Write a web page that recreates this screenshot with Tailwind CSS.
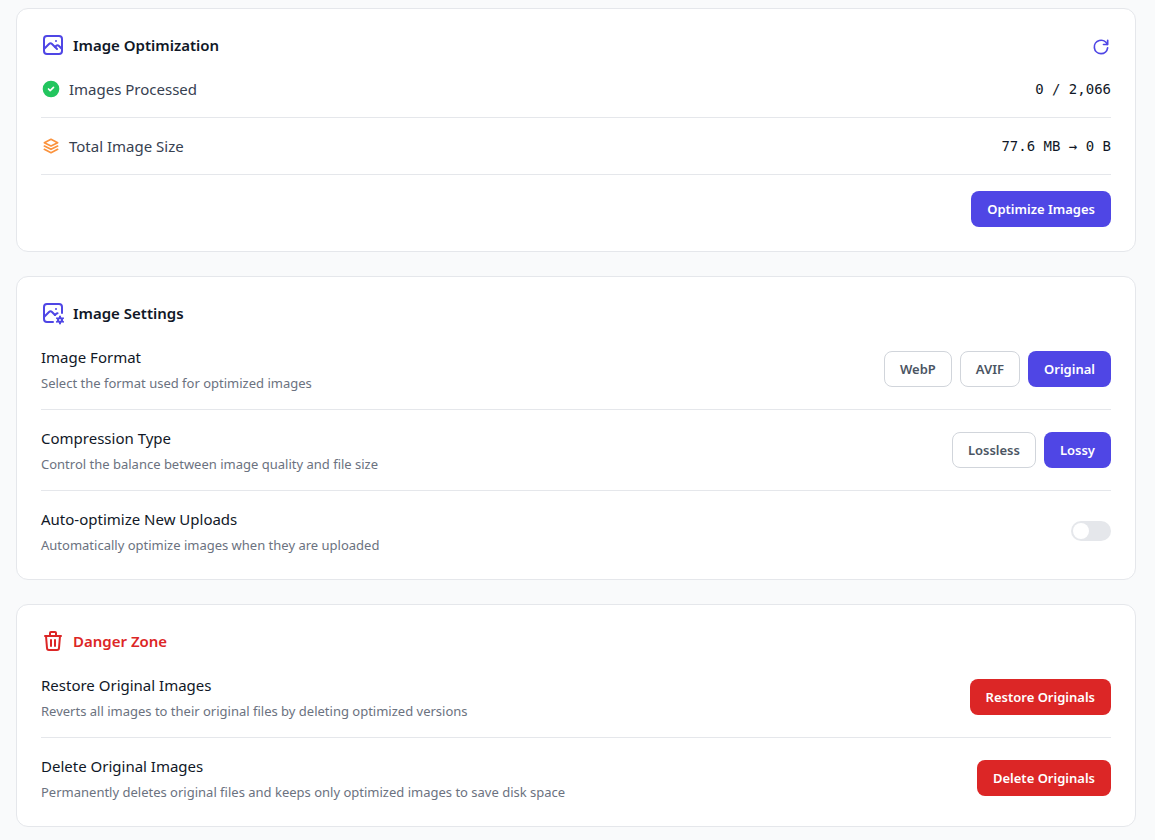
<!DOCTYPE html>
<html lang="en">
<head>
    <meta charset="UTF-8">
    <meta name="viewport" content="width=device-width, initial-scale=1.0">
    <title>Image Optimization</title>
    <script src="https://cdn.jsdelivr.net/npm/@tailwindcss/browser@4"></script>
</head>
<body class="bg-[#f9fafb] text-[#111827] text-[15px] leading-6 font-['Segoe_UI','Noto_Sans',sans-serif]">
    <main class="flex flex-col gap-6 pt-2 pb-3 pl-4 pr-[19px]">

        <!-- Optimization status -->
        <section class="bg-white border border-[#e5e7eb] rounded-xl p-6">
            <div class="flex items-center justify-between h-6 mb-5">
                <h2 class="flex items-center gap-2 font-semibold">
                    <svg class="size-6 text-[#4f46e5]" viewBox="0 0 24 24" fill="none" stroke="currentColor" stroke-width="2" stroke-linecap="round" stroke-linejoin="round" aria-hidden="true">
                        <path d="M15 8h.01"/>
                        <path d="M3 6a3 3 0 0 1 3-3h12a3 3 0 0 1 3 3v12a3 3 0 0 1-3 3H6a3 3 0 0 1-3-3z"/>
                        <path d="M3 16l5-5c.928-.893 2.072-.893 3 0l5 5"/>
                        <path d="M14 14l1-1c.928-.893 2.072-.893 3 0l3 3"/>
                    </svg>
                    Image Optimization
                </h2>
                <button type="button" aria-label="Refresh" class="self-end text-[#4f46e5] cursor-pointer">
                    <svg class="size-5" viewBox="0 0 24 24" fill="none" stroke="currentColor" stroke-width="2" stroke-linecap="round" stroke-linejoin="round">
                        <path d="M19.933 13.041a8 8 0 1 1-9.925-8.788c3.899-1 7.935 1.007 9.425 4.747"/>
                        <path d="M20 4v5h-5"/>
                    </svg>
                </button>
            </div>
            <div class="flex items-center justify-between pb-4 border-b border-[#e5e7eb]">
                <div class="flex items-center gap-2 text-[#374151]">
                    <svg class="size-5" viewBox="0 0 24 24" fill="none" aria-hidden="true">
                        <circle cx="12" cy="12" r="10" fill="#22c55e"/>
                        <path d="M9 12l2 2 4-4" stroke="#fff" stroke-width="2" stroke-linecap="round" stroke-linejoin="round"/>
                    </svg>
                    <span>Images Processed</span>
                </div>
                <span class="text-[14px] font-['DejaVu_Sans_Mono',monospace]">0 / 2,066</span>
            </div>
            <div class="flex items-center justify-between py-4 border-b border-[#e5e7eb]">
                <div class="flex items-center gap-2 text-[#374151]">
                    <svg class="size-5 text-[#fb923c]" viewBox="0 0 24 24" fill="none" stroke="currentColor" stroke-width="2" stroke-linecap="round" stroke-linejoin="round" aria-hidden="true">
                        <path d="M12 4L4 8l8 4 8-4-8-4"/>
                        <path d="M4 12l8 4 8-4"/>
                        <path d="M4 16l8 4 8-4"/>
                    </svg>
                    <span>Total Image Size</span>
                </div>
                <span class="text-[14px] font-['DejaVu_Sans_Mono',monospace]">77.6 MB → 0 B</span>
            </div>
            <div class="flex justify-end pt-4">
                <button type="button" class="h-9 px-4 rounded-lg bg-[#4f46e5] text-white text-[13px] font-semibold cursor-pointer">Optimize Images</button>
            </div>
        </section>

        <!-- Settings -->
        <section class="bg-white border border-[#e5e7eb] rounded-xl p-6">
            <h2 class="flex items-center gap-2 font-semibold mb-5">
                <svg class="size-6 text-[#4f46e5]" viewBox="0 0 24 24" fill="none" stroke="currentColor" stroke-width="2" stroke-linecap="round" stroke-linejoin="round" aria-hidden="true">
                    <path d="M15 8h.01"/>
                    <path d="M12 21H6a3 3 0 0 1-3-3V6a3 3 0 0 1 3-3h12a3 3 0 0 1 3 3v6"/>
                    <path d="M3 16l5-5c.928-.893 2.072-.893 3 0l3 3"/>
                    <path d="M14 14l1-1c.48-.461 1.016-.684 1.551-.67"/>
                    <circle cx="19" cy="19" r="2"/>
                    <path d="M19 15.5V17M19 21v1.5M22.03 17.25l-1.3.75M17.27 20l-1.3.75M15.97 17.25l1.3.75M20.73 20l1.3.75"/>
                </svg>
                Image Settings
            </h2>
            <div class="flex items-center justify-between pb-4 border-b border-[#e5e7eb]">
                <div>
                    <h3 class="mb-1">Image Format</h3>
                    <p class="text-[13px] leading-5 text-[#6b7280]">Select the format used for optimized images</p>
                </div>
                <div class="flex gap-2 text-[13px] font-semibold" role="group" aria-label="Image Format">
                    <button type="button" aria-pressed="false" class="h-9 px-[15px] rounded-lg border border-[#d1d5db] bg-white text-[#4b5563] cursor-pointer">WebP</button>
                    <button type="button" aria-pressed="false" class="h-9 px-[15px] rounded-lg border border-[#d1d5db] bg-white text-[#4b5563] cursor-pointer">AVIF</button>
                    <button type="button" aria-pressed="true" class="h-9 px-4 rounded-lg bg-[#4f46e5] text-white cursor-pointer">Original</button>
                </div>
            </div>
            <div class="flex items-center justify-between py-4 border-b border-[#e5e7eb]">
                <div>
                    <h3 class="mb-1">Compression Type</h3>
                    <p class="text-[13px] leading-5 text-[#6b7280]">Control the balance between image quality and file size</p>
                </div>
                <div class="flex gap-2 text-[13px] font-semibold" role="group" aria-label="Compression Type">
                    <button type="button" aria-pressed="false" class="h-9 px-[15px] rounded-lg border border-[#d1d5db] bg-white text-[#4b5563] cursor-pointer">Lossless</button>
                    <button type="button" aria-pressed="true" class="h-9 px-4 rounded-lg bg-[#4f46e5] text-white cursor-pointer">Lossy</button>
                </div>
            </div>
            <div class="flex items-center justify-between pt-4">
                <div>
                    <label for="autoOptimize" class="block mb-1">Auto-optimize New Uploads</label>
                    <p class="text-[13px] leading-5 text-[#6b7280]">Automatically optimize images when they are uploaded</p>
                </div>
                <input type="checkbox" id="autoOptimize" class="appearance-none flex items-center w-10 h-5 p-0.5 rounded-full bg-[#e5e7eb] cursor-pointer before:block before:size-4 before:rounded-full before:bg-white checked:bg-[#4f46e5] checked:justify-end">
            </div>
        </section>

        <!-- Danger zone -->
        <section class="bg-white border border-[#e5e7eb] rounded-xl p-6">
            <h2 class="flex items-center gap-2 font-semibold text-[#dc2626] mb-5">
                <svg class="size-6" viewBox="0 0 24 24" fill="none" stroke="currentColor" stroke-width="2" stroke-linecap="round" stroke-linejoin="round" aria-hidden="true">
                    <path d="M4 7h16"/>
                    <path d="M10 11v6"/>
                    <path d="M14 11v6"/>
                    <path d="M5 7l1 12a2 2 0 0 0 2 2h8a2 2 0 0 0 2-2l1-12"/>
                    <path d="M9 7V4a1 1 0 0 1 1-1h4a1 1 0 0 1 1 1v3"/>
                </svg>
                Danger Zone
            </h2>
            <div class="flex items-center justify-between pb-4 border-b border-[#e5e7eb]">
                <div>
                    <h3 class="mb-1">Restore Original Images</h3>
                    <p class="text-[13px] leading-5 text-[#6b7280]">Reverts all images to their original files by deleting optimized versions</p>
                </div>
                <button type="button" class="h-9 px-4 rounded-lg bg-[#dc2626] text-white text-[13px] font-semibold cursor-pointer">Restore Originals</button>
            </div>
            <div class="flex items-center justify-between pt-4">
                <div>
                    <h3 class="mb-1">Delete Original Images</h3>
                    <p class="text-[13px] leading-5 text-[#6b7280]">Permanently deletes original files and keeps only optimized images to save disk space</p>
                </div>
                <button type="button" class="h-9 px-4 rounded-lg bg-[#dc2626] text-white text-[13px] font-semibold cursor-pointer">Delete Originals</button>
            </div>
        </section>

    </main>
</body>
</html>
